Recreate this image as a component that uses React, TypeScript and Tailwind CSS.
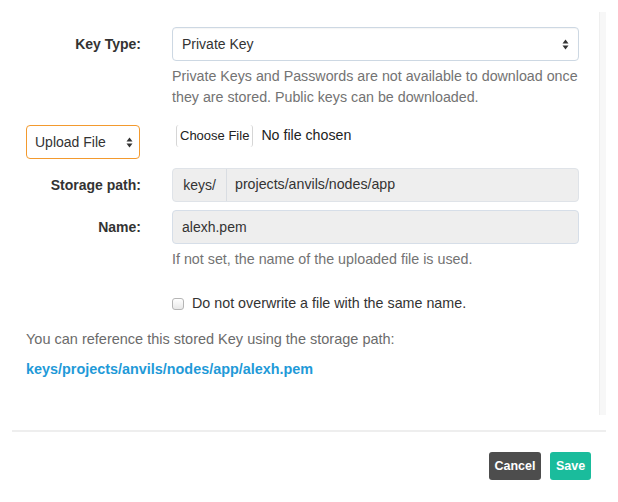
import React from "react";

function Arrows() {
  return (
    <svg width="7" height="11" viewBox="0 0 7 11" className="shrink-0">
      <path d="M3.5 0.5 L6.5 4.5 L0.5 4.5 Z" fill="#333" />
      <path d="M3.5 10.5 L6.5 6.5 L0.5 6.5 Z" fill="#333" />
    </svg>
  );
}

export default function App() {
  return (
    <div className="w-[618px] h-[502px] bg-white font-['Liberation_Sans',Arial,sans-serif] text-[14px] text-[#333] overflow-hidden">
      <div className="flex h-[415px] pt-[12px]">
        <div className="flex-1 flex flex-col">
          {/* Key type */}
          <div className="flex items-center mt-[15px] pl-[26px] gap-[31px]">
            <div className="w-[115px] text-right font-bold">Key Type:</div>
            <div className="w-[407px] h-[34px] border border-[#cdd8e3] rounded-[4px] flex items-center justify-between pl-[9px] pr-[9px] shadow-[inset_0_1px_1px_rgba(0,0,0,0.04)]">
              <span>Private Key</span>
              <Arrows />
            </div>
          </div>
          <div className="mt-[5px] pl-[172px] w-[590px] text-[#737373] text-[14.25px] leading-[21px]">
            Private Keys and Passwords are not available to download once they are stored. Public keys can be downloaded.
          </div>

          {/* Upload row */}
          <div className="flex items-start mt-[17px] pl-[26px] gap-[36px]">
            <div className="w-[114px] h-[34px] border-[1.5px] border-[#f39a2e] rounded-[4px] flex items-center justify-between pl-[8px] pr-[6px]">
              <span>Upload File</span>
              <Arrows />
            </div>
            <div className="flex items-center h-[22px] mt-0">
              <div className="h-[22px] px-[3px] border-x border-[#d6d6d6] rounded-[3px] flex items-center text-[13px] text-[#222]">Choose File</div>
              <span className="ml-[8px] text-[#222] text-[14.2px]">No file chosen</span>
            </div>
          </div>

          {/* Storage path */}
          <div className="flex items-center mt-[9px] pl-[26px] gap-[31px]">
            <div className="w-[115px] text-right font-bold">Storage path:</div>
            <div className="w-[407px] h-[34px] border border-[#dfe3e8] rounded-[4px] bg-[#eeeeee] flex items-center">
              <div className="w-[54px] h-full flex items-center justify-center border-r border-[#d9dde2]">keys/</div>
              <span className="pl-[8px] text-[14.2px]">projects/anvils/nodes/app</span>
            </div>
          </div>

          {/* Name */}
          <div className="flex items-center mt-[8px] pl-[26px] gap-[31px]">
            <div className="w-[115px] text-right font-bold">Name:</div>
            <div className="w-[407px] h-[34px] border border-[#d6dee8] rounded-[4px] bg-[#eeeeee] flex items-center pl-[9px]">
              alexh.pem
            </div>
          </div>
          <div className="mt-[5px] pl-[172px] text-[#737373] text-[14.3px] leading-[20px]">
            If not set, the name of the uploaded file is used.
          </div>

          {/* Checkbox */}
          <div className="mt-[25px] pl-[172px] flex items-center h-[20px]">
            <div className="w-[12px] h-[12px] rounded-[3px] border border-[#b5b5b5] bg-gradient-to-b from-white to-[#e8e8e8]" />
            <span className="ml-[8px] text-[14.3px]">Do not overwrite a file with the same name.</span>
          </div>

          <div className="mt-[15px] pl-[26px] text-[#6b6b6b] text-[14.5px] leading-[20px]">
            You can reference this stored Key using the storage path:
          </div>
          <div className="mt-[10px] pl-[26px] leading-[20px] font-bold text-[14.4px] text-[#1f9ad8]">
            keys/projects/anvils/nodes/app/alexh.pem
          </div>
        </div>
        <div className="w-[7px] bg-[#f7f7f7] border-l border-[#efefef] mr-[12px]" />
      </div>
      <div className="mx-[12px] mt-[15px] h-[2px] bg-[#eeeeee]" />
      <div className="flex justify-end gap-[9px] pr-[27px] mt-[20px]">
        <div className="w-[52px] h-[28px] rounded-[3px] bg-[#4d4d4d] text-white font-bold text-[12.5px] flex items-center justify-center">Cancel</div>
        <div className="w-[41px] h-[28px] rounded-[3px] bg-[#1abc9c] text-white font-bold text-[12.5px] flex items-center justify-center">Save</div>
      </div>
    </div>
  );
}
